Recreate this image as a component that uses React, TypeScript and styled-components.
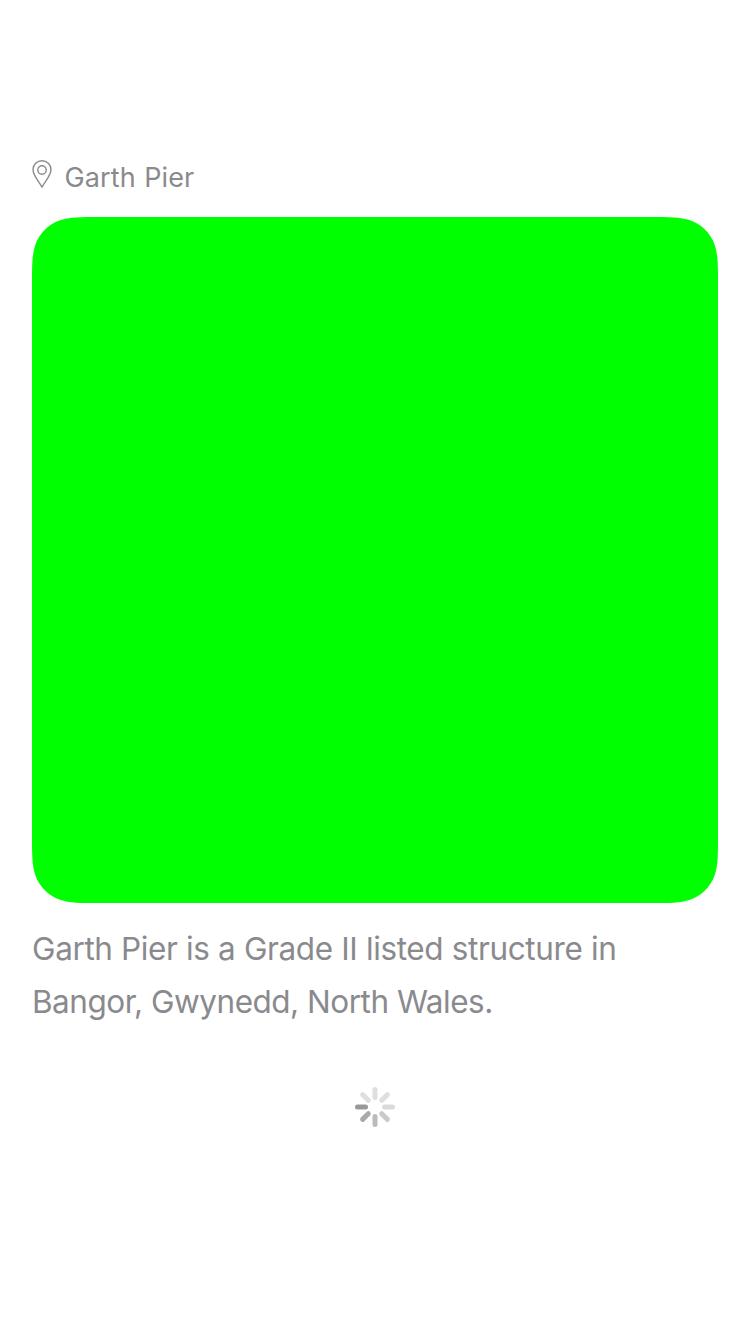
import React from 'react';
import styled, { createGlobalStyle } from 'styled-components';

const GlobalStyle = createGlobalStyle`
  * { box-sizing: border-box; }
  body {
    margin: 0;
    background: #ffffff;
    color: #8a8a8e;
    font-family: Inter, "Liberation Sans", sans-serif;
  }
`;

const Screen = styled.main`
  display: flex;
  flex-direction: column;
  min-height: 1334px;
  padding: 156px 32px 0;
`;

const LocationRow = styled.header`
  display: flex;
  align-items: flex-start;
  height: 61px;
`;

const PinIcon = styled.svg`
  width: 20px;
  height: 30px;
  margin-top: 3px;
  flex: none;
`;

const PlaceName = styled.h1`
  margin: 1px 0 0 12.5px;
  font-size: 27px;
  line-height: 42px;
  font-weight: 400;
  letter-spacing: 0.1px;
  word-spacing: 0.8px;
  white-space: nowrap;
`;

// Corners with continuous curvature at a 44px radius.
const Photo = styled.div`
  width: 686px;
  height: 686px;
  flex: none;
  background: #00ff00;
  clip-path: path("M67.26 0 H618.74 C638.11 0 647.79 0 658.21 3.3 C669.6 7.44 678.56 16.4 682.7 27.79 C686 38.21 686 47.89 686 67.26 V618.74 C686 638.11 686 647.79 682.7 658.21 C678.56 669.6 669.6 678.56 658.21 682.7 C647.79 686 638.11 686 618.74 686 H67.26 C47.89 686 38.21 686 27.79 682.7 C16.4 678.56 7.44 669.6 3.3 658.21 C0 647.79 0 638.11 0 618.74 V67.26 C0 47.89 0 38.21 3.3 27.79 C7.44 16.4 16.4 7.44 27.79 3.3 C38.21 0 47.89 0 67.26 0 Z");
`;

const Description = styled.p`
  margin: 19px 0 0;
  font-size: 31.5px;
  line-height: 53px;
  letter-spacing: -0.37px;
  white-space: nowrap;
`;

const DescriptionLine = styled.span<{ $tracking?: number }>`
  display: block;
  letter-spacing: ${({ $tracking = -0.37 }) => $tracking}px;
`;

const Spinner = styled.svg`
  width: 40px;
  height: 40px;
  margin: 59px auto 0;
  flex: none;
`;

const spokes = ['#dfdfdf', '#dfdfdf', '#dadada', '#cacaca', '#bbbbbb', '#a9a9ab', '#99999b', '#dfdfdf'];

export default function App() {
  return (
    <>
      <GlobalStyle />
      <Screen>
        <LocationRow>
          <PinIcon viewBox="0 0 20 30" fill="none" stroke="#8a8a8e" strokeWidth="1.4" strokeLinejoin="round">
            <path d="M10 1.7C5.1 1.7 1 5.3 1 10.4C1 16.3 6.8 22.2 10 28.1C13.2 22.2 19 16.3 19 10.4C19 5.3 14.9 1.7 10 1.7Z" />
            <circle cx="10" cy="11" r="4.2" />
          </PinIcon>
          <PlaceName>Garth Pier</PlaceName>
        </LocationRow>
        <Photo />
        <Description>
          <DescriptionLine>Garth Pier is a Grade II listed structure in</DescriptionLine>
          <DescriptionLine $tracking={-0.49}>Bangor, Gwynedd, North Wales.</DescriptionLine>
        </Description>
        <Spinner viewBox="-20 -20 40 40" strokeWidth="5" strokeLinecap="round">
          {spokes.map((color, i) => (
            <line key={i} x1="0" y1="-9.5" x2="0" y2="-17.5" stroke={color} transform={`rotate(${i * 45})`} />
          ))}
        </Spinner>
      </Screen>
    </>
  );
}
